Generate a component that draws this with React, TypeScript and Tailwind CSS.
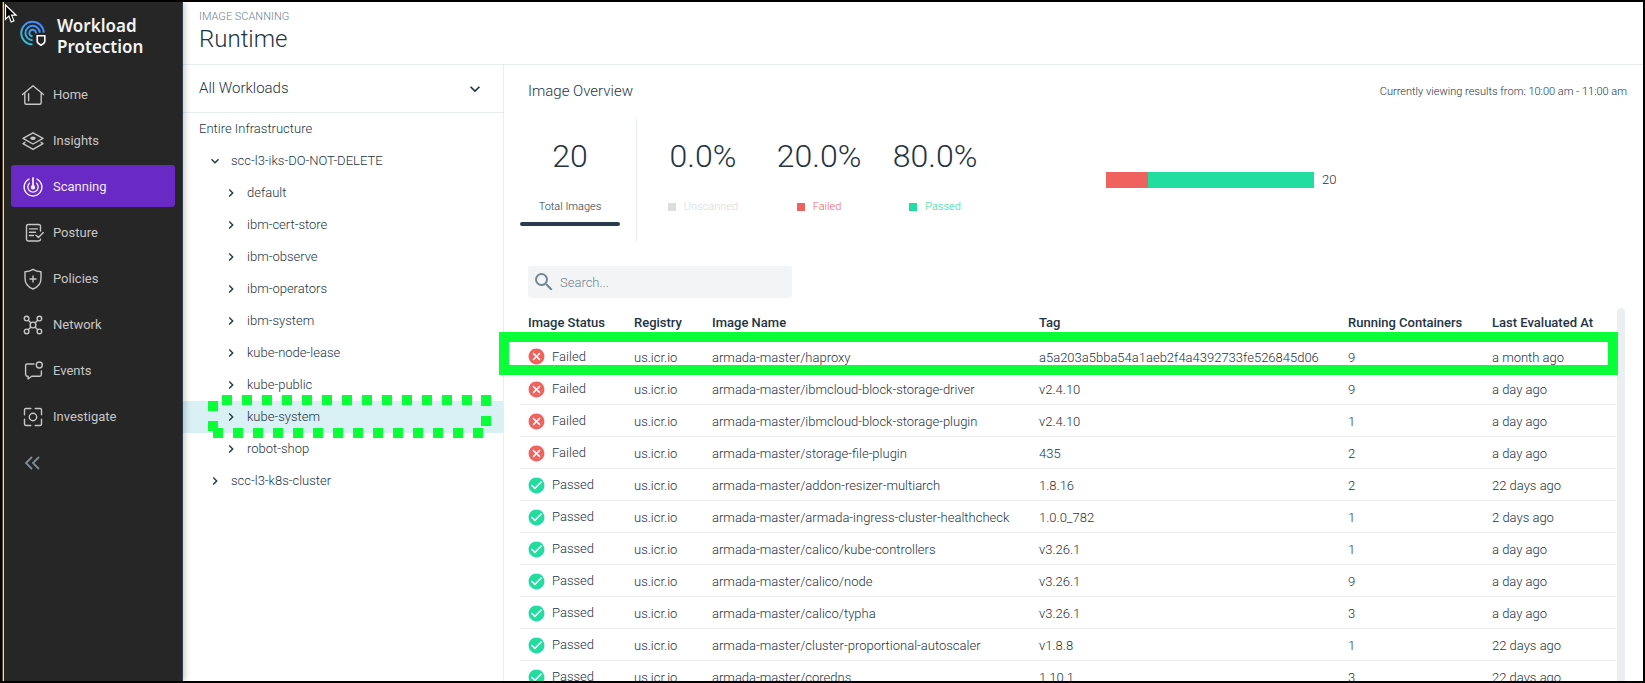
import React from "react";
import { MdCancel, MdCheckCircle, MdChevronRight, MdExpandMore, MdSearch } from "react-icons/md";

type IconProps = { children: React.ReactNode };

function NavIcon({ children }: IconProps) {
  return (
    <svg
      viewBox="0 0 24 24"
      className="size-6 shrink-0"
      fill="none"
      stroke="currentColor"
      strokeWidth="1.4"
      strokeLinecap="round"
      strokeLinejoin="round"
      aria-hidden="true"
    >
      {children}
    </svg>
  );
}

const NAV = [
  {
    label: "Home",
    icon: (
      <>
        <path d="M1.5 11.5 12 2.7l10.5 8.8" />
        <path d="M3.8 10v9.7c0 .9.6 1.5 1.5 1.5h13.4c.9 0 1.5-.6 1.5-1.5V10" />
        <path d="M7.6 10.8v7" />
      </>
    ),
  },
  {
    label: "Insights",
    icon: (
      <>
        <path d="M12 3.8 22 9.4 12 15 2 9.4z" />
        <path d="M4 13.4 2 14.6l10 5.8 10-5.8-2-1.2" />
        <ellipse cx="12" cy="9.3" rx="2.1" ry="1.1" fill="currentColor" />
      </>
    ),
  },
  {
    label: "Scanning",
    icon: (
      <>
        <path d="M8 4.1a8.9 8.9 0 1 0 8 0" />
        <path d="M8.4 8.2a5.2 5.2 0 1 0 7.2 0" />
        <path d="M12 3v8" strokeWidth="1.8" />
        <circle cx="12" cy="12.2" r="1.5" fill="currentColor" />
      </>
    ),
  },
  {
    label: "Posture",
    icon: (
      <>
        <path d="M19.5 10V5.2c0-1-.7-1.7-1.7-1.7H7.2c-1 0-1.7.7-1.7 1.7v13.1c0 1 .7 1.7 1.7 1.7h10.6c1 0 1.7-.7 1.7-1.7" />
        <path d="M8.5 7.9h8M8.5 11.2h6M8.5 14.5h4" />
        <path d="m15 14.2 2.4 2.3 4.9-5" />
      </>
    ),
  },
  {
    label: "Policies",
    icon: (
      <>
        <path d="M12 2.3c2.4 1.5 5 2.3 8 2.5v6.4c0 5-2.9 8.8-8 10.800-5.100-2-8-5.800-8-10.800V4.800c3-.2 5.600-1 8-2.500z" />
        <path d="M12 9v6M9 12h6" />
      </>
    ),
  },
  {
    label: "Network",
    icon: (
      <>
        <circle cx="12" cy="12" r="2.9" />
        <circle cx="5.6" cy="5.6" r="2.3" />
        <circle cx="18.4" cy="5.6" r="2.3" />
        <circle cx="5.6" cy="18.4" r="2.3" />
        <circle cx="18.4" cy="18.4" r="2.3" />
        <path d="m7.5 7.5 2.2 2.2M16.5 7.5l-2.2 2.2M7.5 16.5l2.2-2.2M16.5 16.5l-2.2-2.2" />
      </>
    ),
  },
  {
    label: "Events",
    icon: (
      <>
        <path d="M13 5H6.2C5.3 5 4.6 5.7 4.6 6.6v9c0 .9.7 1.6 1.6 1.6h.9V20l3.6-2.8h8.1c.9 0 1.6-.7 1.6-1.6V12" />
        <circle cx="18.3" cy="6" r="3" />
      </>
    ),
  },
  {
    label: "Investigate",
    icon: (
      <>
        <path d="M3.5 9.8V5c0-.9.6-1.5 1.5-1.5h4.8M14.2 3.5H19c.9 0 1.5.6 1.5 1.5v4.8M20.5 14.2V19c0 .9-.6 1.5-1.5 1.5h-4.8M9.8 20.5H5c-.9 0-1.5-.6-1.5-1.5v-4.8" />
        <circle cx="12" cy="12" r="3.7" />
      </>
    ),
  },
];

function Logo() {
  return (
    <svg viewBox="0 0 28 28" className="size-7 shrink-0" fill="none" aria-hidden="true">
      <defs>
        <linearGradient id="logo-sweep" x1="24" y1="2" x2="6" y2="26" gradientUnits="userSpaceOnUse">
          <stop offset="0.2" stopColor="#4589ff" />
          <stop offset="1" stopColor="#2cc7d3" />
        </linearGradient>
      </defs>
      <g stroke="url(#logo-sweep)" strokeWidth="1.9">
        <path d="M24.8 13.6A11.3 11.3 0 1 0 13.6 25.4" />
        <path d="M20.8 13.6A7.2 7.2 0 1 0 13.6 21.2" />
        <path d="M16.9 14.4A3.3 3.3 0 1 0 13.6 17.3" />
      </g>
      <path
        d="M18.2 16.8h7.6v5.4c0 1.7-1.5 2.8-3.8 4-2.3-1.2-3.8-2.3-3.8-4z"
        fill="#262626"
        stroke="#fff"
        strokeWidth="1.6"
      />
    </svg>
  );
}

function Sidebar() {
  return (
    <aside className="relative z-10 flex w-[180px] shrink-0 flex-col border-l border-r border-l-[#e0dcd8] border-r-[#2c3e50] bg-[#262626] shadow-[2px_0_6px_rgba(0,0,0,0.22)]">
      <div className="flex items-start gap-2 pl-[15px] pt-[13px]">
        <div className="pt-1">
          <Logo />
        </div>
        <h1 className="pl-[2px] font-['Noto_Sans','Open_Sans',sans-serif] text-[17px] font-semibold leading-[21px] text-[#f4f4f4]">
          Workload
          <br />
          Protection
        </h1>
      </div>
      <nav aria-label="Main" className="mt-4 flex flex-col gap-1 px-[7px]">
        {NAV.map((item) => (
          <a
            key={item.label}
            href="#"
            aria-current={item.label === "Scanning" ? "page" : undefined}
            className={
              item.label === "Scanning"
                ? "flex h-[42px] items-center gap-2 rounded-[3px] bg-[#6929c4] pl-[10px] pt-px text-[13px] font-normal text-[#f0eaf8]"
                : "flex h-[42px] items-center gap-2 rounded-[3px] pl-[10px] pt-px text-[13px] font-normal text-[#c6c6c6]"
            }
          >
            <NavIcon>{item.icon}</NavIcon>
            {item.label}
          </a>
        ))}
        <button
          type="button"
          aria-label="Collapse menu"
          className="flex h-[42px] items-center pl-[10px] pt-px text-[#7d8b94]"
        >
          <svg viewBox="0 0 24 24" className="size-6" fill="none" stroke="currentColor" strokeWidth="1.8" aria-hidden="true">
            <path d="m11 6-6 6 6 6M18 6l-6 6 6 6" />
          </svg>
        </button>
      </nav>
    </aside>
  );
}

const NAMESPACES = [
  "default",
  "ibm-cert-store",
  "ibm-observe",
  "ibm-operators",
  "ibm-system",
  "kube-node-lease",
  "kube-public",
  "kube-system",
  "robot-shop",
];

const TOP_DOTS = Array.from({ length: 13 }, (_, i) => 14 + i * 20);
const BOTTOM_DOTS = Array.from({ length: 14 }, (_, i) => 5 + i * 20);

function DottedMarker() {
  return (
    <svg
      className="pointer-events-none absolute -top-[6px] left-[25px] h-[43px] w-[283px]"
      viewBox="0 0 283 43"
      fill="#09ff37"
      aria-hidden="true"
    >
      {TOP_DOTS.map((x) => (
        <rect key={x} x={x} y="0" width="10" height="10" />
      ))}
      {BOTTOM_DOTS.map((x) => (
        <rect key={x} x={x} y="33" width="10" height="10" />
      ))}
      <rect x="0" y="6" width="10" height="10" />
      <rect x="0" y="26" width="10" height="10" />
      <rect x="273" y="0" width="10" height="11" />
      <rect x="273" y="21" width="10" height="10" />
    </svg>
  );
}

function WorkloadTree() {
  return (
    <section aria-label="Workloads" className="w-[321px] shrink-0 border-r border-[#e8edf1]">
      <button
        type="button"
        className="flex h-12 w-full items-center justify-between border-b border-[#e8edf1] pl-4 pr-[18px] text-left text-[15px]"
      >
        All Workloads
        <MdExpandMore className="size-5 text-[#1f2f3f]" />
      </button>
      <div className="flex h-8 items-center pl-4 text-[13px]">Entire Infrastructure</div>
      <ul className="text-[13px]">
        <li>
          <button type="button" className="flex h-8 w-full items-center gap-2 pl-6 text-left">
            <MdExpandMore className="size-4" />
            scc-l3-iks-DO-NOT-DELETE
          </button>
          <ul>
            {NAMESPACES.map((name) => (
              <li key={name} className="relative">
                <button
                  type="button"
                  className={
                    name === "kube-system"
                      ? "flex h-8 w-full items-center gap-2 bg-[#d9f1f5] pl-10 text-left"
                      : "flex h-8 w-full items-center gap-2 pl-10 text-left"
                  }
                >
                  <MdChevronRight className="size-4" />
                  {name}
                </button>
                {name === "kube-system" && <DottedMarker />}
              </li>
            ))}
          </ul>
        </li>
        <li>
          <button type="button" className="flex h-8 w-full items-center gap-2 pl-6 text-left">
            <MdChevronRight className="size-4" />
            scc-l3-k8s-cluster
          </button>
        </li>
      </ul>
    </section>
  );
}

const STATS = [
  { value: "0.0%", label: "Unscanned", text: "text-[#d6dadb]", swatch: "bg-[#dcdfde]" },
  { value: "20.0%", label: "Failed", text: "text-[#f0625d]", swatch: "bg-[#f0625d]" },
  { value: "80.0%", label: "Passed", text: "text-[#21dea0]", swatch: "bg-[#21dea0]" },
];

function Overview() {
  return (
    <>
      <div className="flex h-[53px] items-center justify-between pl-6 pr-4">
        <h3 className="text-[15px]">Image Overview</h3>
        <p className="pt-px text-[11px]">Currently viewing results from: 10:00 am - 11:00 am</p>
      </div>
      <div className="flex h-[124px] pl-4">
        <div className="flex w-[117px] shrink-0 border-r border-[#e8edf1]">
          <button type="button" className="flex h-[108px] w-[100px] flex-col items-center border-0 pt-[18px]">
            <span className="text-[32px] leading-10">20</span>
            <span className="mt-[23px] text-[11px] leading-4">Total Images</span>
            <span className="mt-[7px] h-1 w-full shrink-0 rounded-sm bg-[#2a3b4d]" />
          </button>
        </div>
        <div className="flex shrink-0 pl-2">
          {STATS.map((s) => (
            <div key={s.label} className="flex w-[116px] flex-col items-center pt-[18px]">
              <span className="text-[32px] leading-10">{s.value}</span>
              <span className={`mt-[23px] flex items-center gap-2 text-[11px] leading-4 ${s.text}`}>
                <span className={`size-2 ${s.swatch}`} />
                {s.label}
              </span>
            </div>
          ))}
        </div>
        <div className="flex items-center gap-2 pl-[113px] text-[13px]">
          <div className="flex h-4 w-[208px]" role="img" aria-label="20 images: 20% failed, 80% passed">
            <div className="w-1/5 bg-[#f0625d]" />
            <div className="w-4/5 bg-[#21dea0]" />
          </div>
          20
        </div>
      </div>
    </>
  );
}

type Row = { ok: boolean; name: string; tag: string; running: number; at: string };

const ROWS: Row[] = [
  { ok: false, name: "haproxy", tag: "a5a203a5bba54a1aeb2f4a4392733fe526845d06", running: 9, at: "a month ago" },
  { ok: false, name: "ibmcloud-block-storage-driver", tag: "v2.4.10", running: 9, at: "a day ago" },
  { ok: false, name: "ibmcloud-block-storage-plugin", tag: "v2.4.10", running: 1, at: "a day ago" },
  { ok: false, name: "storage-file-plugin", tag: "435", running: 2, at: "a day ago" },
  { ok: true, name: "addon-resizer-multiarch", tag: "1.8.16", running: 2, at: "22 days ago" },
  { ok: true, name: "armada-ingress-cluster-healthcheck", tag: "1.0.0_782", running: 1, at: "2 days ago" },
  { ok: true, name: "calico/kube-controllers", tag: "v3.26.1", running: 1, at: "a day ago" },
  { ok: true, name: "calico/node", tag: "v3.26.1", running: 9, at: "a day ago" },
  { ok: true, name: "calico/typha", tag: "v3.26.1", running: 3, at: "a day ago" },
  { ok: true, name: "cluster-proportional-autoscaler", tag: "v1.8.8", running: 1, at: "22 days ago" },
  { ok: true, name: "coredns", tag: "1.10.1", running: 3, at: "22 days ago" },
];

function ImageTable() {
  return (
    <div className="relative flex min-h-0 flex-1 pl-4 pr-[18px]">
      <div className="min-w-0 flex-1 overflow-hidden">
        <table className="w-full table-fixed border-collapse text-[13px]">
          <colgroup>
            <col className="w-[106px]" />
            <col className="w-[78px]" />
            <col className="w-[327px]" />
            <col />
            <col className="w-[144px]" />
            <col className="w-[132px]" />
          </colgroup>
          <thead>
            <tr className="h-8 text-left">
              {["Image Status", "Registry", "Image Name", "Tag", "Running Containers", "Last Evaluated At"].map((h) => (
                <th key={h} scope="col" className="whitespace-nowrap p-0 pb-[2px] pl-2 font-medium">
                  {h}
                </th>
              ))}
            </tr>
          </thead>
          <tbody>
            {ROWS.map((r) => (
              <tr key={r.name} className="h-8 border-b border-[#ebeeef]">
                <td className="p-0 pl-[7px] pt-[2px]">
                  <span className="flex items-center gap-[6px]">
                    {r.ok ? (
                      <MdCheckCircle className="size-[19px] text-[#21dea0]" />
                    ) : (
                      <MdCancel className="size-[19px] text-[#f0625d]" />
                    )}
                    {r.ok ? "Passed" : "Failed"}
                  </span>
                </td>
                <td className="p-0 pl-2 pt-1">us.icr.io</td>
                <td className="whitespace-nowrap p-0 pl-2 pt-1">armada-master/{r.name}</td>
                <td className="whitespace-nowrap p-0 pl-2 pt-1">{r.tag}</td>
                <td className="p-0 pl-2 pt-1">{r.running}</td>
                <td className="p-0 pl-2 pt-1">{r.at}</td>
              </tr>
            ))}
          </tbody>
        </table>
      </div>
      <div className="ml-px w-2 rounded-t bg-[#ebeff2]" />
      <div className="pointer-events-none absolute -left-[5px] right-[25px] top-6 h-[43px] border-10 border-[#09ff37]" />
    </div>
  );
}

function Cursor() {
  return (
    <svg
      className="pointer-events-none absolute left-[2px] top-[2px] z-20 h-[20px] w-[14px]"
      viewBox="0 0 14 20"
      aria-hidden="true"
    >
      <path
        d="M1.5 1v14.3l3.4-3.2 2.3 5.8 2.7-1.1-2.3-5.6h4.5z"
        fill="#000"
        stroke="#fff"
        strokeWidth="1.2"
      />
    </svg>
  );
}

export default function App() {
  return (
    <div className="relative flex h-screen overflow-hidden border-2 border-black bg-white font-['Roboto',sans-serif] font-light text-[#233443]">
      <div className="w-px shrink-0 bg-[#6b4a1e]" />
      <Cursor />
      <Sidebar />
      <div className="flex min-w-0 flex-1 flex-col">
        <header className="h-[63px] shrink-0 border-b border-[#e8edf1] pl-4 pt-[7px]">
          <p className="text-[11px] leading-4 text-[#6b8490]">IMAGE SCANNING</p>
          <h2 className="text-[24px] leading-7">Runtime</h2>
        </header>
        <div className="flex min-h-0 flex-1">
          <WorkloadTree />
          <main className="flex min-w-0 flex-1 flex-col">
            <Overview />
            <div className="flex h-[66px] shrink-0 items-start pl-6 pt-6">
              <label className="flex h-8 w-[264px] items-center gap-1 rounded-[3px] bg-[#f3f4f6] pl-1">
                <MdSearch className="size-6 text-[#708796]" />
                <input
                  type="search"
                  aria-label="Search images"
                  placeholder="Search..."
                  className="min-w-0 flex-1 bg-transparent pt-px text-[13px] outline-none placeholder:text-[#6b8490]"
                />
              </label>
            </div>
            <ImageTable />
          </main>
        </div>
      </div>
    </div>
  );
}
